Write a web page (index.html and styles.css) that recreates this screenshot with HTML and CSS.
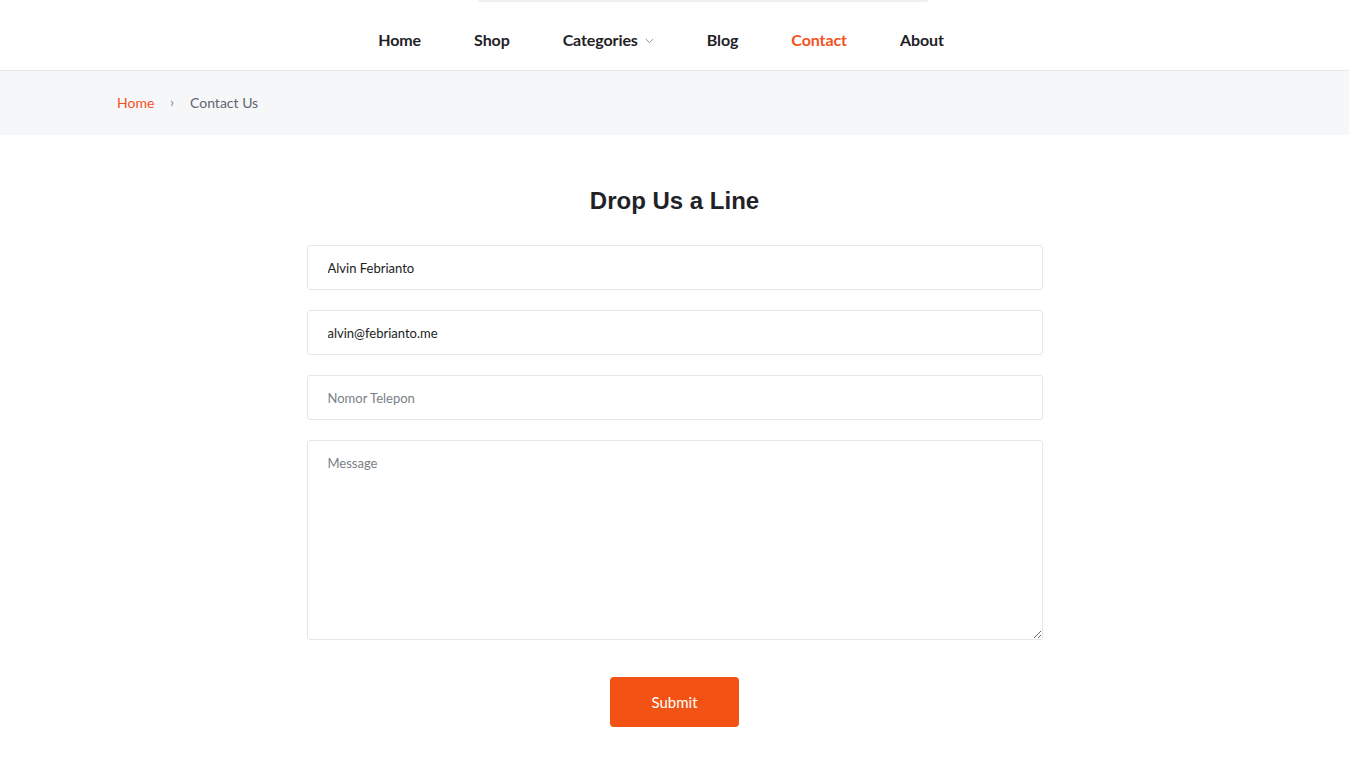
FILE: index.html
```html
<!DOCTYPE html>
<html lang="en">
<head>
<meta charset="utf-8">
<title>Contact Us</title>
<link rel="stylesheet" href="styles.css">
</head>
<body>
<header class="header">
  <div class="topline"></div>
  <nav class="nav">
    <a class="nav-link" href="#">Home</a>
    <a class="nav-link" href="#">Shop</a>
    <a class="nav-link" href="#">Categories
      <svg class="chev" width="9" height="6" viewBox="0 0 9 6"><path d="M0.8 1 L4.5 4.6 L8.2 1" fill="none" stroke="#8a94a3" stroke-width="1"/></svg>
    </a>
    <a class="nav-link" href="#">Blog</a>
    <a class="nav-link active" href="#">Contact</a>
    <a class="nav-link" href="#">About</a>
  </nav>
</header>
<div class="crumbs">
  <a class="crumb-home" href="#">Home</a>
  <span class="crumb-sep">›</span>
  <span class="crumb-cur">Contact Us</span>
</div>
<main class="main">
  <h1 class="title">Drop Us a Line</h1>
  <form class="form">
    <input class="field" type="text" value="Alvin Febrianto">
    <input class="field" type="email" value="alvin@febrianto.me">
    <input class="field" type="text" placeholder="Nomor Telepon">
    <textarea class="field area" placeholder="Message"></textarea>
    <div class="actions"><button class="submit" type="button">Submit</button></div>
  </form>
</main>
</body>
</html>
```

FILE: styles.css
```css
* { box-sizing: border-box; }
html, body { margin: 0; padding: 0; background: #fff; }
body { font-family: Lato, "Liberation Sans", sans-serif; color: #222; }

.header {
  height: 71px;
  border-bottom: 1px solid #e6e8ea;
  display: flex;
  flex-direction: column;
}
.topline {
  margin-left: 478px;
  width: 450px;
  height: 2px;
  flex: none;
  background: #eeeff1;
  border-radius: 0 0 2px 2px;
}
.nav {
  flex: 1;
  display: flex;
  justify-content: center;
  align-items: center;
  gap: 53px;
  padding-top: 6px;
  padding-right: 27px;
}
.nav-link {
  font-size: 16px;
  font-weight: 700;
  color: #1f2226;
  text-decoration: none;
  display: flex;
  align-items: center;
  gap: 7px;
  letter-spacing: -0.1px;
}
.nav-link.active { color: #f4511e; }
.chev { margin-top: 3px; }

.crumbs {
  background: #f6f7f9;
  height: 64px;
  display: flex;
  align-items: center;
  padding-left: 117px;
  padding-bottom: 2px;
  font-size: 14px;
  gap: 14px;
}
.crumb-home { color: #f4511e; text-decoration: none; }
.crumb-sep { color: #777; font-size: 13px; margin: 0 2px; }
.crumb-cur { color: #5f6670; }

.main {
  display: flex;
  flex-direction: column;
  align-items: center;
  padding-top: 52px;
}
.title {
  margin: 0;
  font-family: "Liberation Sans", Arial, sans-serif;
  font-size: 24px;
  font-weight: 700;
  color: #1f2226;
  line-height: 28px;
}
.form {
  width: 736px;
  margin-top: 30px;
  display: flex;
  flex-direction: column;
  gap: 20px;
}
.field {
  width: 100%;
  height: 45px;
  border: 1px solid #e4e6e8;
  border-radius: 3px;
  padding: 0 20px;
  font-family: Lato, "Liberation Sans", sans-serif;
  font-size: 13px;
  color: #222;
  background: #fff;
  outline: none;
}
.field::placeholder { color: #7a7f86; }
.area {
  height: 200px;
  padding-top: 14px;
  resize: vertical;
  display: block;
}
.actions {
  display: flex;
  justify-content: center;
  margin-top: 17px;
}
.submit {
  width: 129px;
  height: 50px;
  border: none;
  border-radius: 4px;
  background: #f25314;
  color: #fff;
  font-family: Lato, "Liberation Sans", sans-serif;
  font-size: 15px;
}
```
